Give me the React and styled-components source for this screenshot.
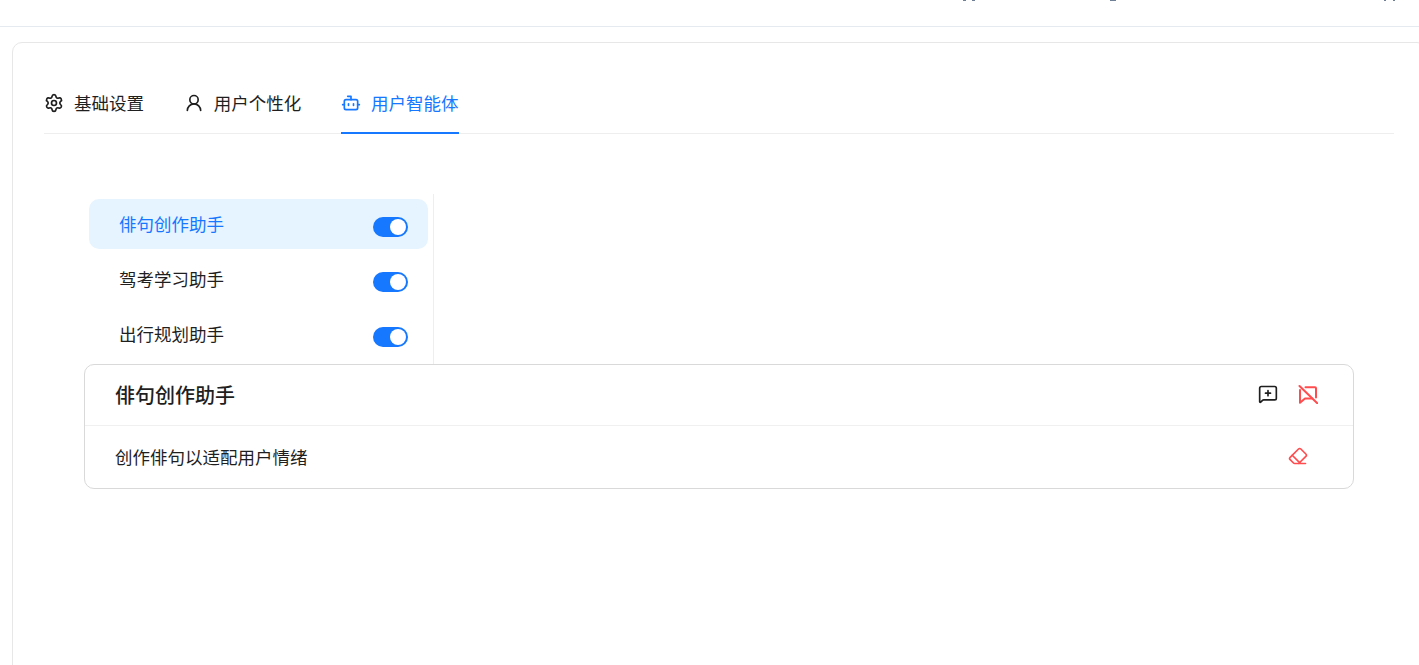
import React from "react"
import styled, { createGlobalStyle } from "styled-components"
import { Settings, UserRound, Bot, MessageSquarePlus, Eraser } from "lucide-react"

const GlobalStyle = createGlobalStyle`
  html, body {
    margin: 0;
    height: 100%;
    background: #ffffff;
    overflow: hidden;
    font-family: "Inter", "Noto Sans CJK SC", sans-serif;
  }
  * { box-sizing: border-box; }
`

const tabs = [
  { label: "基础设置", Icon: Settings },
  { label: "用户个性化", Icon: UserRound },
  { label: "用户智能体", Icon: Bot, active: true },
]

const agents = [
  { name: "俳句创作助手", active: true },
  { name: "驾考学习助手" },
  { name: "出行规划助手" },
]

// bottoms of the header icons, the rest is scrolled off the top
const stubs = [
  { gap: 963, width: 3 },
  { gap: 6, width: 3 },
  { gap: 135, width: 6 },
  { gap: 268, width: 2 },
  { gap: 7, width: 2 },
]

const CommentOff = () => (
  <svg width="20" height="20" viewBox="0 0 20 20" fill="none" stroke="#ff4d4f" strokeWidth="2" strokeLinecap="round" strokeLinejoin="round">
    <path d="M1.5 2 19.5 19.5" />
    <path d="M7.5 3.3H17a1 1 0 0 1 1 1V13.5" />
    <path d="M14 14.5H7L2 18.8V6" />
  </svg>
)

export default function App() {
  return (
    <Page>
      <GlobalStyle />
      <TopBar>
        {stubs.map((s, i) => (
          <Stub key={i} $gap={s.gap} $width={s.width} />
        ))}
      </TopBar>
      <Main>
        <Card>
          <Tabs>
            {tabs.map(({ label, Icon, active }) => (
              <Tab key={label} $active={active}>
                <Icon size={20} strokeWidth={2} />
                <TabLabel>{label}</TabLabel>
              </Tab>
            ))}
          </Tabs>
          <Body>
            <AgentList>
              {agents.map((a) => (
                <AgentRow key={a.name} $active={a.active}>
                  <AgentName>{a.name}</AgentName>
                  <Switch />
                </AgentRow>
              ))}
            </AgentList>
            <DetailCard>
              <DetailHead>
                <DetailTitle>俳句创作助手</DetailTitle>
                <HeadActions>
                  <MessageSquarePlus size={20} strokeWidth={2} color="#1f1f1f" />
                  <CommentOff />
                </HeadActions>
              </DetailHead>
              <DetailRow>
                创作俳句以适配用户情绪
                <Eraser size={20} strokeWidth={2} color="#ff4d4f" />
              </DetailRow>
            </DetailCard>
          </Body>
        </Card>
      </Main>
    </Page>
  )
}

// Styling
const Page = styled.div`
  height: 665px;
  display: flex;
  flex-direction: column;
  overflow: hidden;
`

const TopBar = styled.header`
  height: 27px;
  flex-shrink: 0;
  display: flex;
  align-items: flex-start;
  border-bottom: 1px solid #e5e9f0;
`

const Stub = styled.span`
  height: 1px;
  width: ${(p) => p.$width}px;
  margin-left: ${(p) => p.$gap}px;
  background: #6f7f96;
`

const Main = styled.main`
  flex: 1;
  padding: 15px 0 0 12px;
  min-height: 0;
`

const Card = styled.section`
  height: 640px;
  margin-right: -8px;
  border: 1px solid #e7e7e7;
  border-radius: 10px;
  padding: 34px 32px 0 31px;
`

const Tabs = styled.nav`
  display: flex;
  gap: 39.75px;
  height: 57px;
  border-bottom: 1px solid #eeeeee;
`

const Tab = styled.div`
  height: 57px;
  display: flex;
  align-items: center;
  gap: 10px;
  padding-bottom: 3px;
  font-size: 17.5px;
  color: ${(p) => (p.$active ? "#1677ff" : "#1f1f1f")};
  border-bottom: 2px solid ${(p) => (p.$active ? "#1677ff" : "transparent")};
`

const TabLabel = styled.span`
  margin-bottom: 2px;
`

const Body = styled.div`
  padding: 60px 40px 0;
`

const AgentList = styled.div`
  width: 350px;
  height: 170px;
  padding: 5px 5px 0 5px;
  border-right: 1px solid #eeeeee;
  display: flex;
  flex-direction: column;
  gap: 5px;
`

const AgentRow = styled.div`
  height: 50px;
  display: flex;
  align-items: center;
  justify-content: space-between;
  padding: 0 20px 0 30px;
  border-radius: 10px;
  font-size: 17.5px;
  color: ${(p) => (p.$active ? "#1677ff" : "#1f1f1f")};
  background: ${(p) => (p.$active ? "#e6f4ff" : "transparent")};
`

const AgentName = styled.span`
  margin-bottom: 2px;
`

const Switch = styled.span`
  position: relative;
  width: 35px;
  height: 20px;
  margin-top: 6px;
  border-radius: 10px;
  background: #1677ff;

  &::after {
    content: "";
    position: absolute;
    top: 2px;
    right: 2px;
    width: 16px;
    height: 16px;
    border-radius: 50%;
    background: #ffffff;
  }
`

const DetailCard = styled.div`
  width: 1270px;
  height: 125px;
  border: 1px solid #d9d9d9;
  border-radius: 10px;
`

const DetailHead = styled.div`
  height: 61px;
  display: flex;
  align-items: center;
  justify-content: space-between;
  padding: 0 35px 2px 30px;
  border-bottom: 1px solid #f0f0f0;
`

const DetailTitle = styled.h2`
  margin: 0;
  font-size: 20px;
  font-weight: 500;
  color: #1f1f1f;
`

const HeadActions = styled.div`
  display: flex;
  gap: 20px;
`

const DetailRow = styled.div`
  height: 62px;
  display: flex;
  align-items: center;
  justify-content: space-between;
  padding: 0 45px 2px 30px;
  font-size: 17.5px;
  color: #1f1f1f;
`
